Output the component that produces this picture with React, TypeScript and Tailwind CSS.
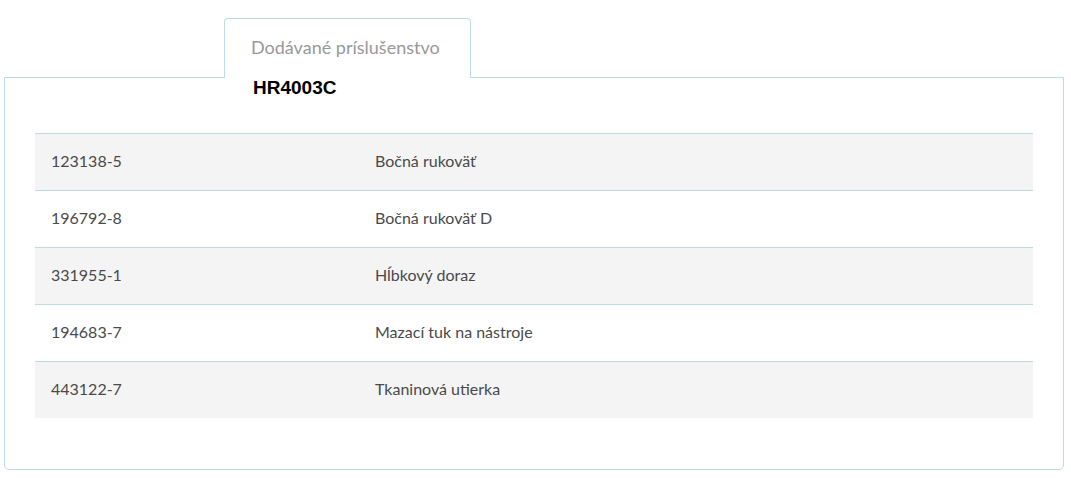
import React from 'react'

const rows = [
  { code: '123138-5', name: 'Bočná rukoväť' },
  { code: '196792-8', name: 'Bočná rukoväť D' },
  { code: '331955-1', name: 'Hĺbkový doraz' },
  { code: '194683-7', name: 'Mazací tuk na nástroje' },
  { code: '443122-7', name: 'Tkaninová utierka' },
]

export default function App() {
  return (
    <div className="min-h-[479px] bg-white pl-[4px] pr-[7px] pt-[18px] font-['Lato','Noto_Sans',sans-serif]">
      <div className="flex">
        <div className="relative z-10 mb-[-1px] ml-[220px] flex h-[60px] w-[247px] items-center rounded-t-[4px] border border-b-0 border-[#bcdbe2] bg-white pb-[3px] pl-[26px] text-[18px] text-[#999999]">
          Dodávané príslušenstvo
        </div>
      </div>
      <div className="h-[393px] rounded-b-[5px] border border-[#bcdbe2] px-[30px]">
        <h2 className="ml-[218px] font-['Liberation_Sans',Arial,sans-serif] text-[19px] font-bold leading-[19px] text-black">
          HR4003C
        </h2>
        <table className="mt-[36px] w-full table-fixed border-separate border-spacing-0 text-[16px] text-[#4a4a4a]">
          <tbody>
            {rows.map((r, i) => (
              <tr key={r.code} className={i % 2 === 0 ? 'bg-[#f4f4f4]' : 'bg-white'}>
                <td className="h-[57px] w-[340px] border-t border-[#bcdbe2] pb-[3px] pl-[16px]">{r.code}</td>
                <td className="h-[57px] border-t border-[#bcdbe2] pb-[3px]">{r.name}</td>
              </tr>
            ))}
          </tbody>
        </table>
      </div>
    </div>
  )
}
